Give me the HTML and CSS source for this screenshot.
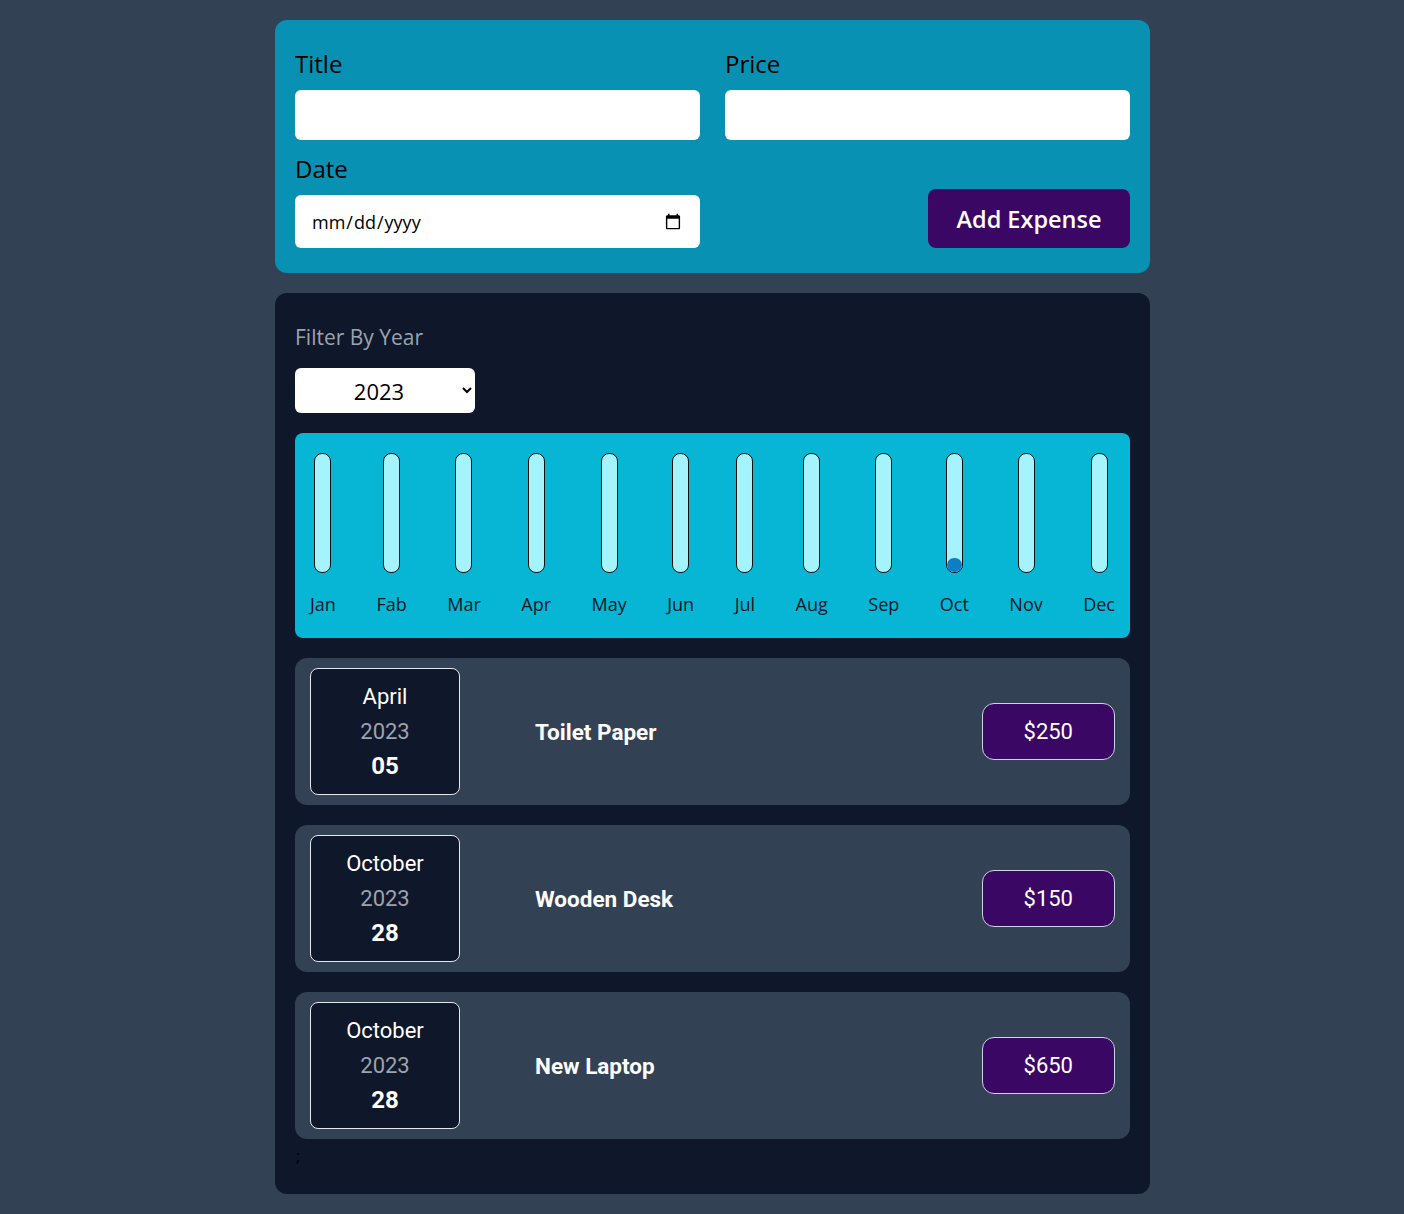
FILE: index.html
```html
<!DOCTYPE html>
<html lang="en">
<head>
<meta charset="utf-8">
<title>Expenses</title>
<link rel="stylesheet" href="styles.css">
</head>
<body>
<div class="app">
  <form class="new-expense">
    <div class="field">
      <label class="lbl">Title</label>
      <input class="inp" type="text">
    </div>
    <div class="field">
      <label class="lbl">Price</label>
      <input class="inp" type="number">
    </div>
    <div class="field">
      <label class="lbl">Date</label>
      <input class="inp inp-date" type="date">
    </div>
    <div class="actions">
      <button type="button" class="add-btn">Add Expense</button>
    </div>
  </form>

  <div class="expenses">
    <div class="filter">
      <label class="filter-lbl">Filter By Year</label>
      <select class="year-select">
        <option>2023</option>
        <option>2022</option>
        <option>2021</option>
      </select>
    </div>

    <div class="chart">
      <div class="col"><div class="bar"><div class="fill" style="height:0%"></div></div><span class="mlabel">Jan</span></div>
      <div class="col"><div class="bar"><div class="fill" style="height:0%"></div></div><span class="mlabel">Fab</span></div>
      <div class="col"><div class="bar"><div class="fill" style="height:0%"></div></div><span class="mlabel">Mar</span></div>
      <div class="col"><div class="bar"><div class="fill" style="height:0%"></div></div><span class="mlabel">Apr</span></div>
      <div class="col"><div class="bar"><div class="fill" style="height:0%"></div></div><span class="mlabel">May</span></div>
      <div class="col"><div class="bar"><div class="fill" style="height:0%"></div></div><span class="mlabel">Jun</span></div>
      <div class="col"><div class="bar"><div class="fill" style="height:0%"></div></div><span class="mlabel">Jul</span></div>
      <div class="col"><div class="bar"><div class="fill" style="height:0%"></div></div><span class="mlabel">Aug</span></div>
      <div class="col"><div class="bar"><div class="fill" style="height:0%"></div></div><span class="mlabel">Sep</span></div>
      <div class="col"><div class="bar"><div class="fill" style="height:12%"></div></div><span class="mlabel">Oct</span></div>
      <div class="col"><div class="bar"><div class="fill" style="height:0%"></div></div><span class="mlabel">Nov</span></div>
      <div class="col"><div class="bar"><div class="fill" style="height:0%"></div></div><span class="mlabel">Dec</span></div>
    </div>

    <ul class="list">
      <li class="item">
        <div class="date">
          <div class="d-month">April</div>
          <div class="d-year">2023</div>
          <div class="d-day">05</div>
        </div>
        <h2 class="item-title">Toilet Paper</h2>
        <div class="price">$250</div>
      </li>
      <li class="item">
        <div class="date">
          <div class="d-month">October</div>
          <div class="d-year">2023</div>
          <div class="d-day">28</div>
        </div>
        <h2 class="item-title">Wooden Desk</h2>
        <div class="price">$150</div>
      </li>
      <li class="item">
        <div class="date">
          <div class="d-month">October</div>
          <div class="d-year">2023</div>
          <div class="d-day">28</div>
        </div>
        <h2 class="item-title">New Laptop</h2>
        <div class="price">$650</div>
      </li>
    </ul>
    <div class="stray">;</div>
  </div>
</div>
</body>
</html>
```

FILE: styles.css
```css
* { box-sizing: border-box; }

body {
  margin: 0;
  background: #334155;
  font-family: "Open Sans", "Noto Sans", sans-serif;
}

.app {
  width: 875px;
  margin: 20px 0 20px 275px;
  display: flex;
  flex-direction: column;
  gap: 20px;
}

/* ---------- form ---------- */
.new-expense {
  background: #0891b2;
  border-radius: 12px;
  padding: 28px 20px 25px;
  display: grid;
  grid-template-columns: 1fr 1fr;
  column-gap: 25px;
  row-gap: 13px;
}

.field {
  display: flex;
  flex-direction: column;
}

.lbl {
  font-size: 24px;
  line-height: 32px;
  font-weight: 500;
  color: #000;
  margin-bottom: 10px;
}

.inp {
  height: 50px;
  border: none;
  border-radius: 6px;
  background: #fff;
  padding: 0 16px;
  font-family: "Open Sans", sans-serif;
  font-size: 18px;
  color: #000;
  outline: none;
}

.inp-date {
  height: 53px;
  padding: 0 16px;
  font-size: 18px;
}

.actions {
  display: flex;
  justify-content: flex-end;
  align-items: flex-end;
}

.add-btn {
  width: 202px;
  height: 59px;
  border: none;
  border-radius: 8px;
  background: #3b0764;
  color: #fff;
  font-family: "Open Sans", sans-serif;
  font-size: 23.5px;
  font-weight: 600;
  cursor: pointer;
}

/* ---------- expenses card ---------- */
.expenses {
  background: #0f172a;
  border-radius: 12px;
  padding: 20px 20px 20px;
  display: flex;
  flex-direction: column;
}

.filter {
  display: flex;
  flex-direction: column;
  align-items: flex-start;
}

.filter-lbl {
  margin-top: 10px;
  font-size: 21px;
  line-height: 28px;
  color: #9ca3af;
  margin-bottom: 17px;
}

.year-select {
  width: 180px;
  height: 45px;
  border: none;
  border-radius: 6px;
  background: #fff;
  font-family: "Open Sans", sans-serif;
  font-size: 22px;
  color: #000;
  text-align: center;
  text-align-last: center;
  padding: 0 8px;
}

/* ---------- chart ---------- */
.chart {
  margin-top: 20px;
  background: #06b6d4;
  border-radius: 8px;
  padding: 20px 15px 20px;
  display: flex;
  justify-content: space-between;
}

.col {
  display: flex;
  flex-direction: column;
  align-items: center;
}

.bar {
  width: 17px;
  height: 120px;
  border: 1px solid #111;
  border-radius: 8px;
  background: #a5f3fc;
  display: flex;
  flex-direction: column;
  justify-content: flex-end;
  overflow: hidden;
}

.fill {
  width: 100%;
  background: #0a7fc4;
  border-radius: 8px;
}

.mlabel {
  margin-top: 17px;
  font-size: 18px;
  line-height: 28px;
  color: #0f172a;
}

/* ---------- list ---------- */
.list {
  list-style: none;
  margin: 20px 0 0;
  padding: 0;
  display: flex;
  flex-direction: column;
  gap: 20px;
}

.item {
  background: #334155;
  border-radius: 12px;
  padding: 10px 15px;
  display: flex;
  align-items: center;
  font-family: Roboto, "Liberation Sans", sans-serif;
}

.date {
  min-width: 150px;
  padding: 10px 35px;
  border: 1px solid #e2e8f0;
  border-radius: 8px;
  background: #0f172a;
  display: flex;
  flex-direction: column;
  align-items: center;
  line-height: 35px;
}

.d-month {
  color: #fff;
  font-size: 22px;
}

.d-year {
  color: #9ca3af;
  font-size: 22px;
}

.d-day {
  color: #fff;
  font-size: 24px;
  font-weight: 700;
}

.item-title {
  margin: 0 0 0 75px;
  flex: 1;
  font-size: 22.5px;
  font-weight: 700;
  color: #fff;
}

.price {
  padding: 10px 41px;
  line-height: 35px;
  border: 1px solid #cbd5e1;
  border-radius: 12px;
  background: #3b0764;
  color: #fff;
  font-size: 22px;
}

.stray {
  height: 35px;
  line-height: 35px;
  font-size: 16px;
  color: #000;
  padding-left: 1px;
}
```
